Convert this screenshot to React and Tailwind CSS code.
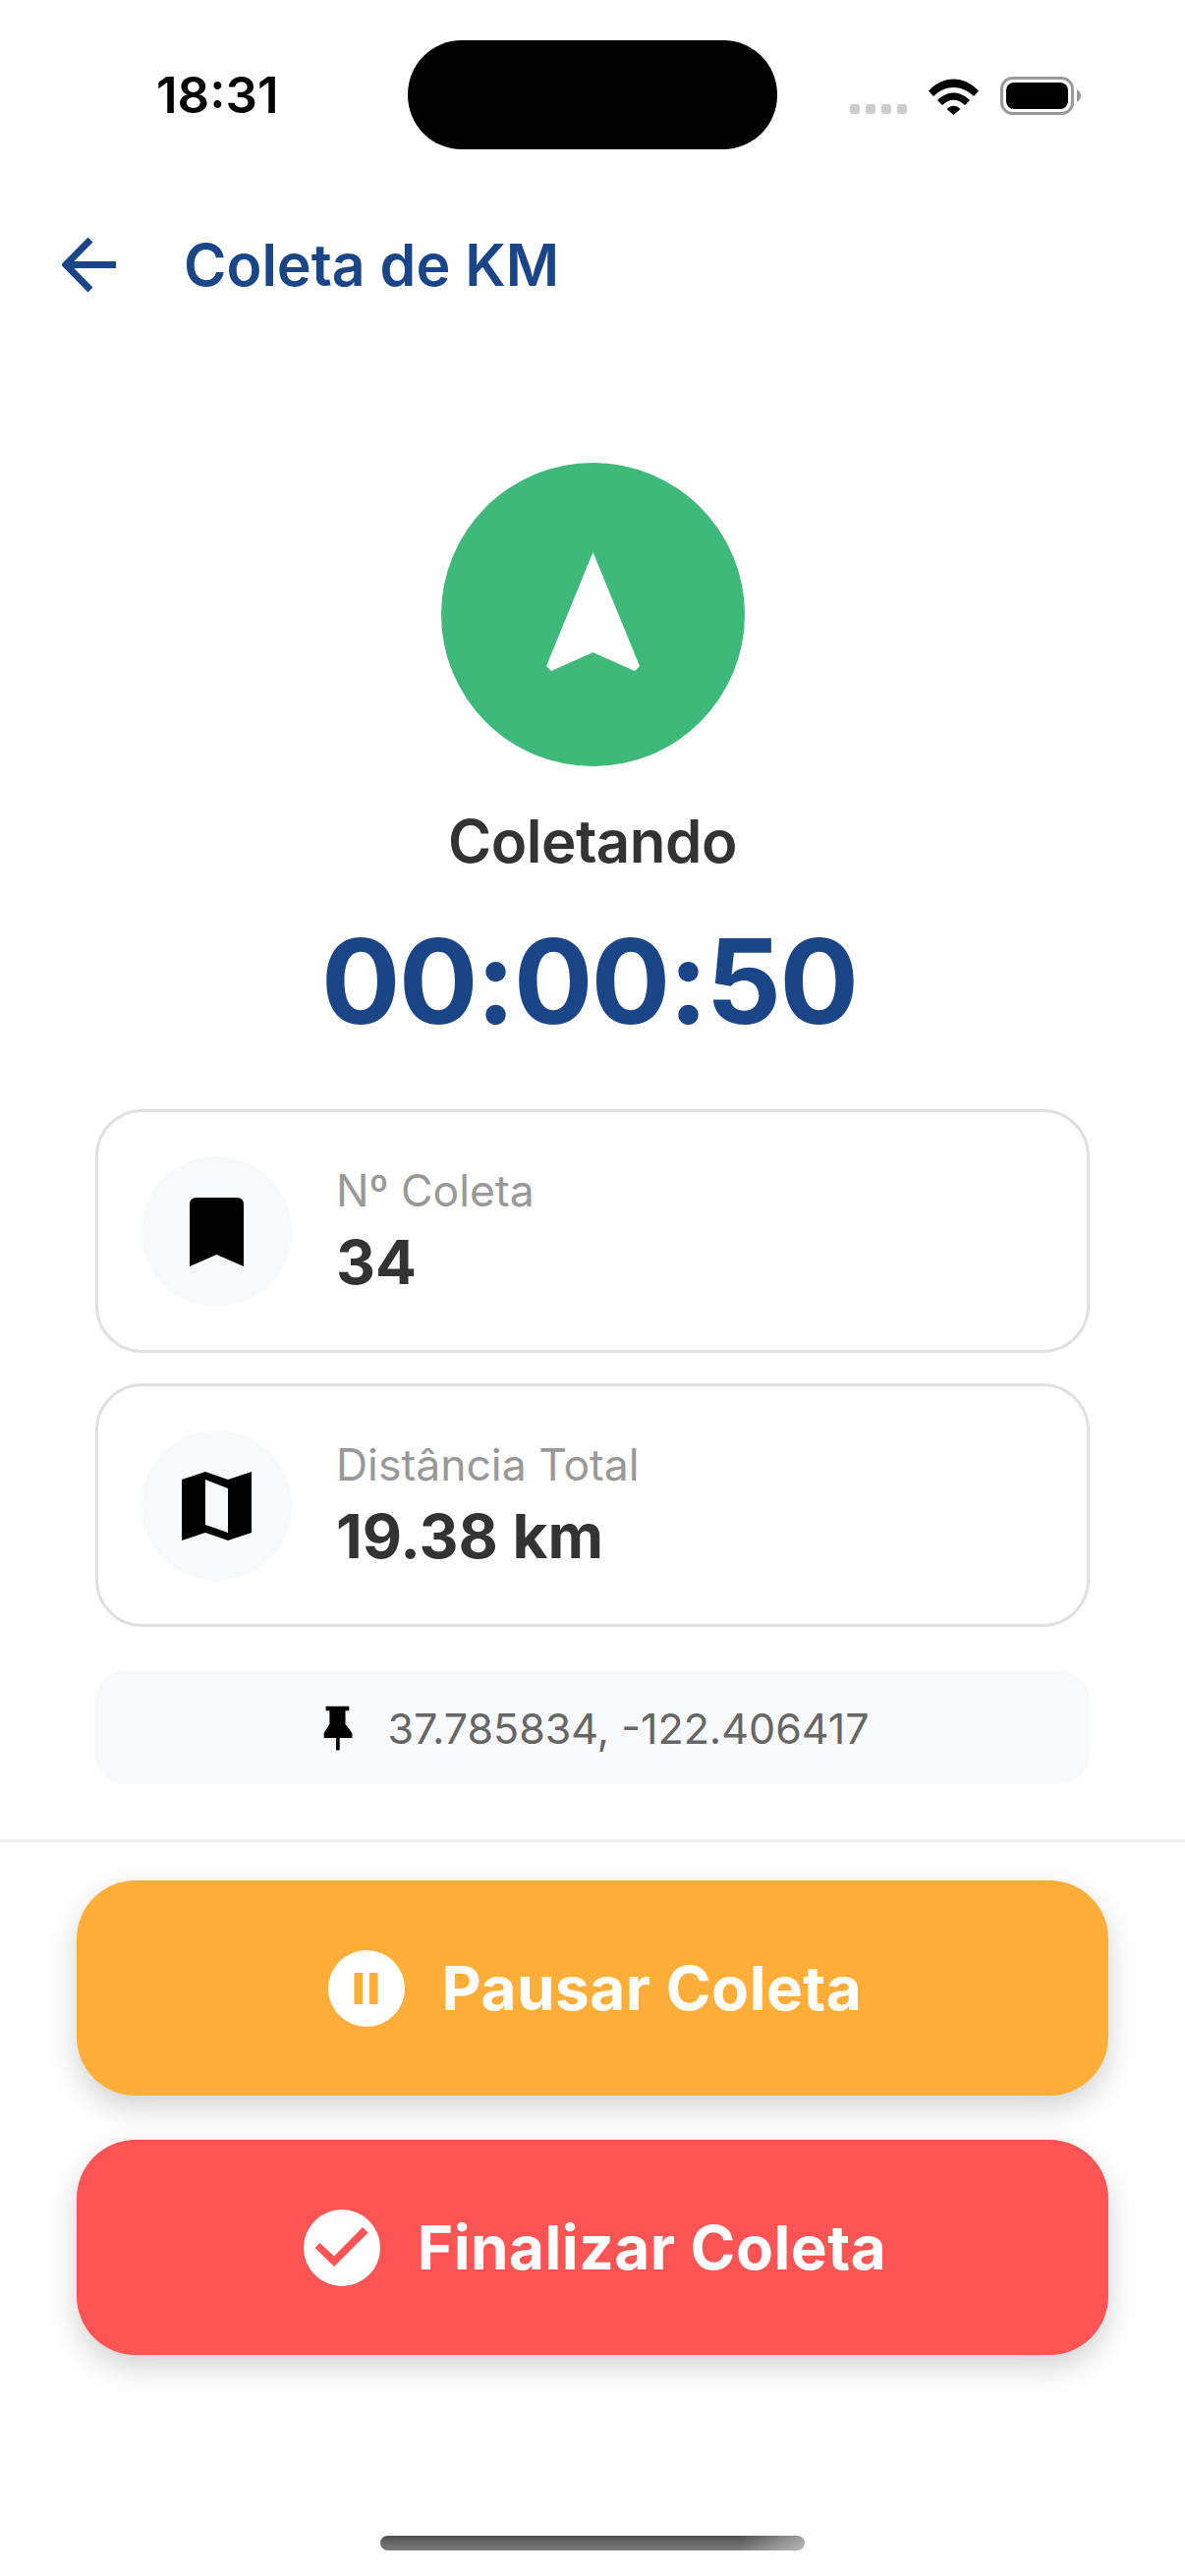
import React from "react";

function Wifi() {
  return (
    <svg width="51" height="37" viewBox="945 79 51 37" className="mt-[1px]">
      <path d="M945 91.5 C960 75.5 981 75.5 996 91.5 L991 97 C978.5 85 962.5 85 950 97 Z" fill="#000" />
      <path d="M954 101 C964 91 977 91 987 101 L982 106 C974 99 967 99 959 106 Z" fill="#000" />
      <path d="M963.5 110 C968 105.5 973 105.5 977.5 110 L970.5 116 Z" fill="#000" />
    </svg>
  );
}

function Battery() {
  return (
    <svg width="82" height="39" viewBox="1018 78 82 39">
      <rect x="1019.5" y="79.5" width="72" height="36" rx="11" fill="#fff" stroke="#9a9a9a" strokeWidth="3" />
      <rect x="1024" y="84" width="63" height="27" rx="8" fill="#000" />
      <path d="M1096 91 C1099 93 1100 95 1100 97.5 C1100 100 1099 102 1096 104 Z" fill="#9a9a9a" />
    </svg>
  );
}

function InfoCard({ label, value, icon }) {
  return (
    <div className="flex h-[248px] items-center rounded-[48px] border-[3px] border-[#e0e0e0] bg-white pl-[44px]">
      <div className="flex h-[153px] w-[153px] items-center justify-center rounded-full bg-[#f8f9fa]">{icon}</div>
      <div className="ml-[45px] flex flex-col gap-[10px]">
        <div className="text-[44.5px] leading-[54px] font-normal text-[#999999]">{label}</div>
        <div className="text-[62px] leading-[72px] font-bold text-[#333333]">{value}</div>
      </div>
    </div>
  );
}

function ActionButton({ bg, label, icon }) {
  return (
    <div className={`flex h-[219px] items-center justify-center gap-[38px] rounded-[60px] pl-[5px] shadow-[0_12px_30px_rgba(0,0,0,0.18)] ${bg}`}>
      {icon}
      <span className="text-[62px] leading-[72px] font-bold tracking-[0.5px] text-white">{label}</span>
    </div>
  );
}

export default function App() {
  return (
    <div className="flex h-[2622px] w-[1206px] flex-col overflow-hidden bg-white font-[Inter,sans-serif]">
      <div className="flex h-[152px] items-start pt-[41px]">
        <div className="ml-[159px] w-[256px] pt-[27px] text-[51px] leading-[58px] font-semibold text-black">18:31</div>
        <div className="h-[111px] w-[376px] rounded-[55px] bg-black" />
        <div className="ml-[74px] flex items-end pt-[37px]">
          <div className="mb-[1px] flex gap-[6px]">
            <span className="h-[10px] w-[10px] rounded-[3px] bg-[#cccccc]" />
            <span className="h-[10px] w-[10px] rounded-[3px] bg-[#cccccc]" />
            <span className="h-[10px] w-[10px] rounded-[3px] bg-[#cccccc]" />
            <span className="h-[10px] w-[10px] rounded-[3px] bg-[#cccccc]" />
          </div>
          <div className="ml-[22px] flex items-center gap-[22px]">
            <Wifi />
            <Battery />
          </div>
        </div>
      </div>

      <div className="mt-[64px] flex h-[108px] items-center pl-[63px]">
        <svg width="56" height="56" viewBox="63 243 56 56" fill="none" stroke="#1a4587" strokeWidth="7" strokeLinecap="butt" strokeLinejoin="miter">
          <path d="M118 270.5 H70" />
          <path d="M92 245 L67 270.5 L92 296" />
        </svg>
        <div className="ml-[68px] text-[59px] leading-[72px] font-semibold text-[#1a4587]">Coleta de KM</div>
      </div>

      <div className="mt-[147px] flex flex-col items-center">
        <div className="h-[309px] w-[309px] rounded-full bg-[#3eb97a]">
          <svg width="309" height="309" viewBox="449 471 309 309">
            <path d="M603.5 562 L651 678 L646 683 L603.5 664 L561 683 L556 678 Z" fill="#fff" />
          </svg>
        </div>
        <div className="mt-[40px] text-[60px] leading-[72px] font-semibold tracking-[-0.5px] text-[#333333]">Coletando</div>
        <div className="mt-[35px] mr-[7px] text-[120px] leading-[144px] font-bold tracking-[-2px] text-[#1a4587]">00:00:50</div>
      </div>

      <div className="mx-[97px] mt-[58px] flex flex-col gap-[31px]">
        <InfoCard
          label="Nº Coleta"
          value="34"
          icon={
            <svg width="153" height="153" viewBox="144 1177 153 153">
              <path d="M193 1289 V1226 Q193 1219 200 1219 H241 Q248 1219 248 1226 V1289 L220.5 1277 Z" fill="#000" />
            </svg>
          }
        />
        <InfoCard
          label="Distância Total"
          value="19.38 km"
          icon={
            <svg width="153" height="153" viewBox="144 1456 153 153">
              <path
                fillRule="evenodd"
                d="M185 1506 L209 1498 L232 1506 L256 1498 V1560 L232 1568 L209 1560 L185 1568 Z M209 1506 V1552 L232 1560 V1515 Z"
                fill="#000"
              />
            </svg>
          }
        />
      </div>

      <div className="mx-[97px] mt-[45px] flex h-[115px] items-center justify-center gap-[35px] rounded-[30px] bg-[#f8f9fa] pl-[8px]">
        <svg width="30" height="46" viewBox="330 1736 30 46">
          <path
            d="M332.6 1736.7 H356.3 V1741.3 H352.5 V1755 L359.4 1764 V1769 H346.7 V1781.5 H343 V1769 H330.7 V1764 L336.4 1755 V1741.3 H332.6 Z"
            fill="#000"
          />
        </svg>
        <span className="text-[43px] leading-[54px] text-[#666666]">37.785834, -122.406417</span>
      </div>

      <div className="mt-[56px] h-[3px] bg-[#f0f0f0]" />

      <div className="mx-[78px] mt-[39px] flex flex-col gap-[45px]">
        <ActionButton
          bg="bg-[#ffae3a]"
          label="Pausar Coleta"
          icon={
            <svg width="78" height="78" viewBox="334 1985 78 78">
              <circle cx="373" cy="2024" r="39" fill="#fff" />
              <rect x="360.5" y="2008" width="8.5" height="32" fill="#ffae3a" />
              <rect x="376" y="2008" width="8.5" height="32" fill="#ffae3a" />
            </svg>
          }
        />
        <ActionButton
          bg="bg-[#ff5454]"
          label="Finalizar Coleta"
          icon={
            <svg width="78" height="78" viewBox="310 2249 78 78">
              <circle cx="349" cy="2288" r="39" fill="#fff" />
              <path d="M321.6 2288 L326.5 2283 L341 2296.5 L370 2267 L375.6 2272.5 L341 2307 Z" fill="#ff5454" />
            </svg>
          }
        />
      </div>

      <div className="mx-auto mt-[184px] h-[15px] w-[432px] rounded-full bg-[linear-gradient(90deg,transparent_85%,rgba(255,255,255,0.45)),linear-gradient(180deg,#505050,#7d7d7d)]" />
    </div>
  );
}
